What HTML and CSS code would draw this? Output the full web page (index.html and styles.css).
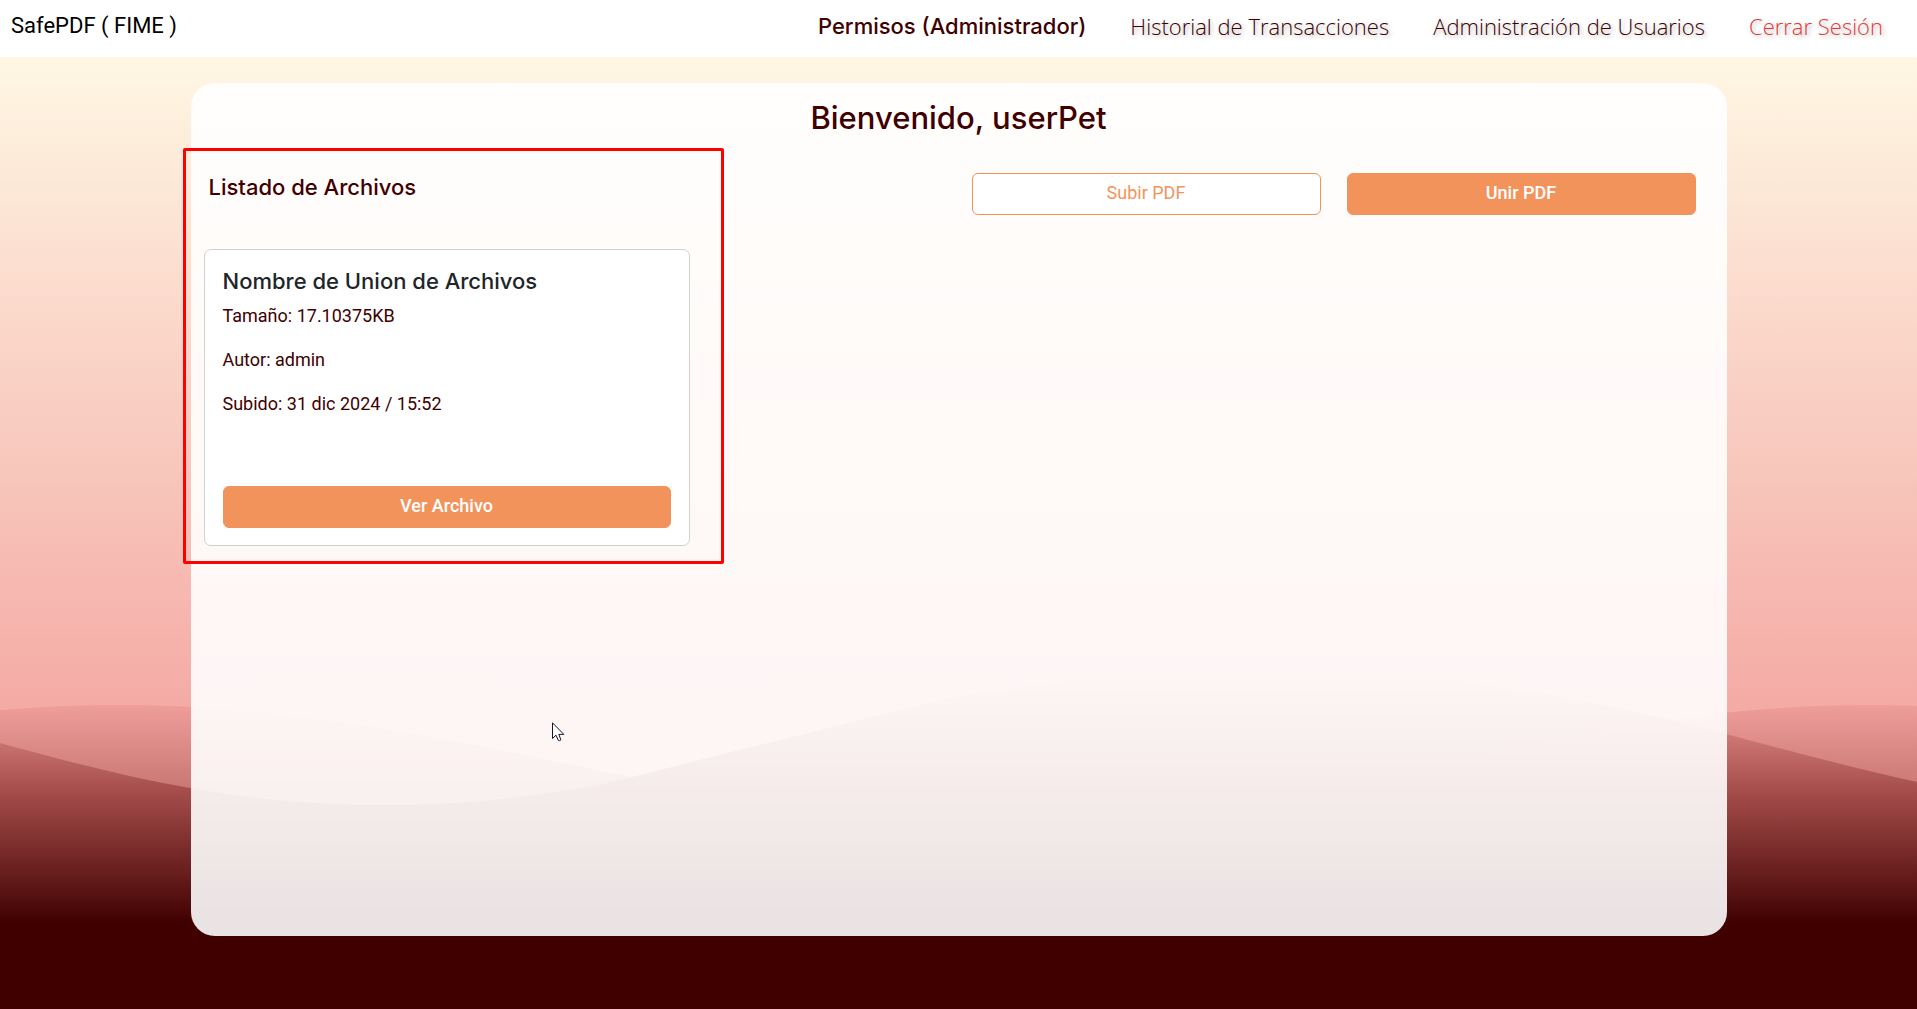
FILE: index.html
```html
<!DOCTYPE html>
<html lang="es">
<head>
<meta charset="utf-8">
<meta name="viewport" content="width=device-width, initial-scale=1">
<title>SafePDF</title>
<link rel="stylesheet" href="styles.css">
</head>
<body>
<svg class="waves" viewBox="0 0 1917 1009" preserveAspectRatio="none" aria-hidden="true">
  <defs>
    <linearGradient id="wave-back" gradientUnits="userSpaceOnUse" x1="0" y1="672" x2="0" y2="924">
      <stop offset="0" stop-color="#f4a5a2"/>
      <stop offset=".46" stop-color="#a8504e"/>
      <stop offset="1" stop-color="#400000"/>
    </linearGradient>
    <linearGradient id="wave-front" gradientUnits="userSpaceOnUse" x1="0" y1="705" x2="0" y2="924">
      <stop offset="0" stop-color="#eb9391"/>
      <stop offset=".37" stop-color="#a8504e"/>
      <stop offset="1" stop-color="#400000"/>
    </linearGradient>
  </defs>
  <path fill="url(#wave-back)" d="M0 743C65 761 127 777 190 788C252 799 315 805 380 805C475 805 560 795 640 775C710 757 776 741 844 724C880 715 915 706 950 698C1055 677 1170 672 1280 672C1370 672 1460 678 1540 693C1604 703 1664 718 1726 734C1790 751 1853 768 1917 782V1009H0Z"/>
  <path fill="url(#wave-front)" fill-opacity=".55" d="M-770 822C-446 822 -204 705 120 705S686 822 1010 822S1546 705 1870 705S2400 822 2700 822V1009H-770Z"/>
</svg>

<header class="navbar">
  <a class="brand" href="#">SafePDF ( FIME )</a>
  <nav class="nav">
    <span class="nav-role">Permisos (Administrador)</span>
    <a class="nav-link" href="#">Historial de Transacciones</a>
    <a class="nav-link" href="#">Administración de Usuarios</a>
    <a class="nav-link nav-logout" href="#">Cerrar Sesión</a>
  </nav>
</header>

<main class="panel">
  <h1 class="title">Bienvenido, userPet</h1>
  <div class="toolbar">
    <h2 class="subtitle">Listado de Archivos</h2>
    <div class="actions">
      <button class="btn btn-outline" type="button">Subir PDF</button>
      <button class="btn" type="button">Unir PDF</button>
    </div>
  </div>
  <div class="files">
    <article class="card">
      <h3 class="card-title">Nombre de Union de Archivos</h3>
      <p class="card-text">Tamaño: 17.10375KB</p>
      <p class="card-text">Autor: admin</p>
      <p class="card-text">Subido: 31 dic 2024 / 15:52</p>
      <button class="btn card-btn" type="button">Ver Archivo</button>
    </article>
  </div>
  <div class="highlight"></div>
  <svg class="cursor" width="13" height="20" viewBox="0 0 13 20" aria-hidden="true">
    <path d="M.5 .8V16.5L4 13.2L6.3 18.3Q7.5 19.2 8.9 17.9L6.8 12.4H11.8Z" fill="#fff" stroke="#15152a" stroke-width="1"/>
  </svg>
</main>
</body>
</html>
```
FILE: styles.css
```css
* {
  box-sizing: border-box;
}

body {
  margin: 0;
  min-height: 100vh;
  position: relative;
  font-family: Roboto, sans-serif;
  font-size: 18px;
  color: #400000;
  background: linear-gradient(#fff8e4 50px, #f4aaa5 710px);
}

h1, h2, h3, p {
  margin: 0;
}

.waves {
  position: absolute;
  inset: 0;
  z-index: -1;
  width: 100%;
  height: 100%;
}

.navbar {
  display: flex;
  align-items: center;
  justify-content: space-between;
  min-height: 57px;
  padding: 0 34px 6px 11px;
  background: #fff;
  font-size: 22px;
  line-height: 30px;
}

.brand {
  color: #000;
  text-decoration: none;
}

.nav {
  display: flex;
  gap: 44px;
}

.nav-role {
  font-family: Inter, sans-serif;
  font-weight: 500;
}

.nav-link {
  color: #400000;
  font-family: "Open Sans", sans-serif;
  font-weight: 300;
  text-decoration: none;
  text-shadow: 2px 2px 4px rgba(0, 0, 0, 0.3);
}

.nav-logout {
  color: #e53935;
}

.panel {
  position: relative;
  width: 100%;
  max-width: 1536px;
  min-height: 853px;
  margin: 26px auto 73px;
  padding: 16px 13px 0;
  border-radius: 24px;
  background: rgba(255, 255, 255, 0.89);
}

.title {
  font: 500 31px/38px Inter, sans-serif;
  text-align: center;
}

.toolbar {
  display: flex;
  justify-content: space-between;
  gap: 24px;
  padding: 36px 18px 34px 5px;
}

.subtitle,
.card-title {
  font: 500 22px/28px Inter, sans-serif;
}

.actions {
  display: grid;
  grid-template-columns: 1fr 1fr;
  gap: 26px;
  flex: 0 1 724px;
}

.btn {
  height: 42px;
  padding: 0 12px 2px;
  border: 1px solid #f3935c;
  border-radius: 6px;
  background: #f3935c;
  color: #fff;
  font: 500 18px/24px Roboto, sans-serif;
}

.btn-outline {
  background: #fff;
  color: #f3935c;
  font-weight: 400;
}

.files {
  display: grid;
  grid-template-columns: repeat(3, 1fr);
  gap: 26px;
}

.card {
  display: flex;
  flex-direction: column;
  min-height: 297px;
  padding: 17px 18px;
  border: 1px solid #d0d1d2;
  border-radius: 7px;
  background: #fff;
}

.card-title {
  margin-bottom: 8px;
  color: #212529;
}

.card-text {
  margin-bottom: 18px;
  line-height: 26px;
}

.card-btn {
  margin-top: auto;
}

.highlight {
  position: absolute;
  top: 65px;
  left: -8px;
  width: 541px;
  height: 416px;
  border: 3px solid #f00;
  border-radius: 2px;
  pointer-events: none;
}

.cursor {
  position: absolute;
  top: 639px;
  left: 361px;
}
```
